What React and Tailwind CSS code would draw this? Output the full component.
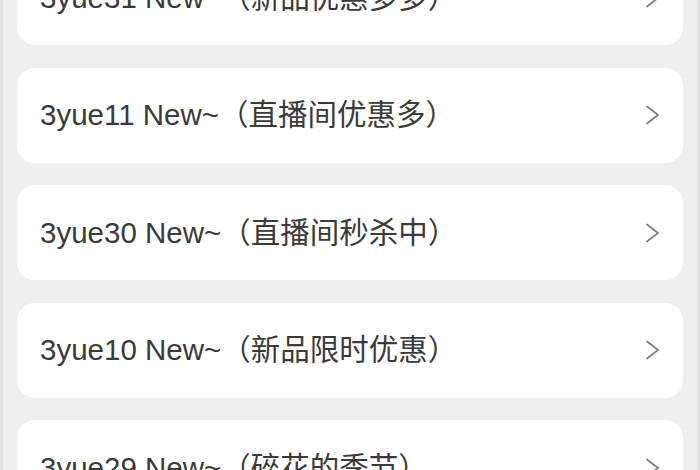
import React from 'react';

const items = [
  '3yue31 New~（新品优惠多多）',
  '3yue11 New~（直播间优惠多）',
  '3yue30 New~（直播间秒杀中）',
  '3yue10 New~（新品限时优惠）',
  '3yue29 New~（碎花的季节）',
];

function Chevron() {
  return (
    <svg width="15" height="20" viewBox="0 0 15 20" fill="none" className="shrink-0">
      <polyline points="2,1.5 13,10 2,18.5" stroke="#808080" strokeWidth="1.8" strokeLinecap="round" strokeLinejoin="round" />
    </svg>
  );
}

export default function App() {
  return (
    <div
      className="w-[700px] h-[470px] overflow-hidden bg-[#efefef] border-x-[3px] border-[#e3e3e3]"
      style={{ fontFamily: '"Liberation Sans", "Noto Sans CJK SC", sans-serif' }}
    >
      <div className="-mt-[50px] px-[14px] flex flex-col gap-[22.5px]">
        {items.map((t) => (
          <div
            key={t}
            className="h-[95px] shrink-0 bg-white rounded-[18px] flex items-center justify-between pl-[23px] pr-[23px]"
          >
            <span className="text-[29.5px] leading-none text-[#3a3a3a] whitespace-nowrap">{t}</span>
            <Chevron />
          </div>
        ))}
      </div>
    </div>
  );
}
